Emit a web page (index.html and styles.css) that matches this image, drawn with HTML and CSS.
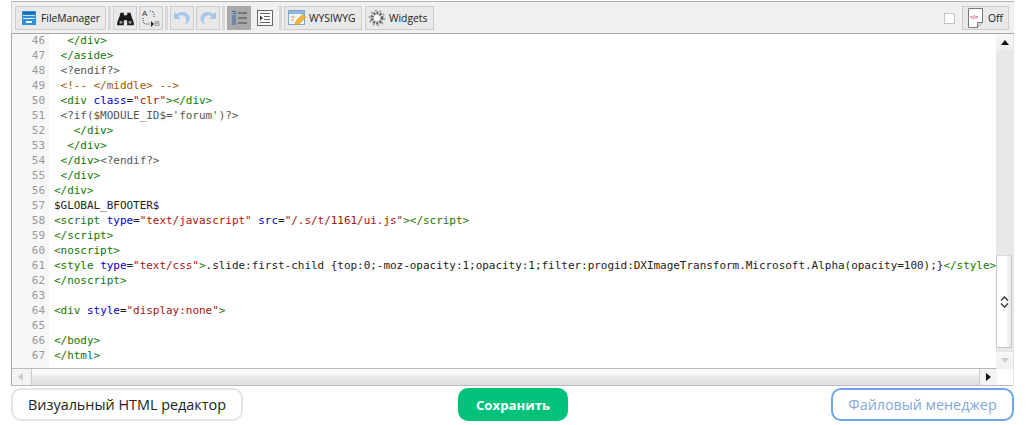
FILE: index.html
```html
<!DOCTYPE html>
<html lang="ru">
<head>
<meta charset="utf-8">
<title>Editor</title>
<link rel="stylesheet" href="styles.css">
</head>
<body>
<div class="editor">
  <div class="toolbar">
    <button class="tb tb-text tb-fm"><svg width="14" height="14" viewBox="0 0 14 14"><rect x="0" y="0" width="14" height="14" fill="#2f8fd8"/><rect x="1" y="1" width="12" height="2.500" fill="#1b6fb8"/><rect x="1" y="4" width="12" height="1" fill="#bfe3fa"/><rect x="1" y="7" width="12" height="1" fill="#dff1fc"/><rect x="4" y="10" width="6" height="2" fill="#fff"/></svg><span>FileManager</span></button>
    <i class="sep"></i>
    <button class="tb"><svg width="17" height="15" viewBox="0 0 20 18"><path d="M4 2h4v3h4V2h4l1 4 3 8v3h-8v-6H8v6H0v-3l3-8z" fill="#1c1c1c"/><circle cx="4.500" cy="13.500" r="1.800" fill="#999"/><circle cx="15.500" cy="13.500" r="1.800" fill="#999"/></svg></button>
    <button class="tb"><svg width="22" height="20" viewBox="0 0 22 20"><text x="2" y="8" class="mini">A</text><path d="M3 10v4l2 2h5M10 3h2l2 2v4" fill="none" stroke="#333" stroke-dasharray="1 1"/><path d="M11 13l3 3-3 3z" fill="#222"/><text x="14.500" y="18" class="mini mini-b">B</text></svg></button>
    <i class="sep"></i>
    <button class="tb"><svg width="18" height="16" viewBox="0 0 18 16"><path d="M1 2v7h7L5.500 6.500C8 4.500 12 5 13 9c.5 2 0 4-1.500 6 3.500-1.500 5.500-4.500 5-7.500C15.500 2.500 9 0 4 4z" fill="#a9c7e8"/></svg></button>
    <button class="tb"><svg width="18" height="16" viewBox="0 0 18 16"><path d="M17 2v7h-7l2.500-2.500C10 4.500 6 5 5 9c-.5 2 0 4 1.500 6C3 13.500 1 10.500 1.500 7.500 2.500 2.500 9 0 14 4z" fill="#a9c7e8"/></svg></button>
    <i class="sep"></i>
    <button class="tb tb-on"><svg width="16" height="16" viewBox="0 0 16 16"><path d="M7 3h9M7 8h9M7 13h9" stroke="#444"/><path d="M1 1.500h4M2 3.500h3M1 6h4M1 8h4M1 10h4M1 12h4M1 14h4" stroke="#3a62a8"/></svg></button>
    <button class="tb tb-small"><svg width="16" height="16" viewBox="0 0 16 16"><rect x=".5" y=".5" width="15" height="15" fill="#fafafa" stroke="#666"/><path d="M3 3.500h10M7 6.500h6M7 9.500h6M3 12.500h10" stroke="#666"/><path d="M3 5.500l3 2.500-3 2.500z" fill="#333"/></svg></button>
    <i class="sep"></i>
    <button class="tb tb-text tb-wys"><svg width="19" height="18" viewBox="0 0 19 18"><rect x=".5" y="1.500" width="16" height="14" fill="#eef5fb" stroke="#7fa4cc"/><rect x="1" y="2" width="15" height="3" fill="#8fb6de"/><path d="M3 8h4M3 11h3" stroke="#e39a2c"/><path d="M7 16l1-4 7-7 3 3-7 7z" fill="#f2b63c" stroke="#c58a1e" stroke-width=".5"/></svg><span>WYSIWYG</span></button>
    <button class="tb tb-text tb-wid"><svg width="18" height="18" viewBox="0 0 18 18"><circle cx="9" cy="9" r="5" fill="none" stroke="#666" stroke-width="3" stroke-dasharray="2 1.200"/><circle cx="9" cy="9" r="7.500" fill="none" stroke="#999" stroke-width="1.500" stroke-dasharray="2 2.700"/><circle cx="9" cy="9" r="2.800" fill="#fff"/></svg><span>Widgets</span></button>
    <span class="spacer"></span>
    <span class="check"></span>
    <button class="tb tb-text tb-off"><svg width="15" height="20" viewBox="0 0 15 20"><path d="M.5.5h14v14l-5 5h-9z" fill="#fff" stroke="#777"/><path d="M9.500 19.500v-5h5" fill="#ddd" stroke="#777"/><text x="2" y="11" class="micro">&lt;/&gt;</text></svg><span>Off</span></button>
  </div>
  <div class="body">
    <div class="code">
<div class="ln"><b>46</b><code>  <s>&lt;/div&gt;</s></code></div>
<div class="ln"><b>47</b><code> <s>&lt;/aside&gt;</s></code></div>
<div class="ln"><b>48</b><code> <u>&lt;?endif?&gt;</u></code></div>
<div class="ln"><b>49</b><code> <q>&lt;!-- &lt;/middle&gt; --&gt;</q></code></div>
<div class="ln"><b>50</b><code> <s>&lt;div</s> <a>class</a>=<em>"clr"</em><s>&gt;&lt;/div&gt;</s></code></div>
<div class="ln"><b>51</b><code> <u>&lt;?if($MODULE_ID$='forum')?&gt;</u></code></div>
<div class="ln"><b>52</b><code>   <s>&lt;/div&gt;</s></code></div>
<div class="ln"><b>53</b><code>  <s>&lt;/div&gt;</s></code></div>
<div class="ln"><b>54</b><code> <s>&lt;/div&gt;</s><u>&lt;?endif?&gt;</u></code></div>
<div class="ln"><b>55</b><code> <s>&lt;/div&gt;</s></code></div>
<div class="ln"><b>56</b><code><s>&lt;/div&gt;</s></code></div>
<div class="ln"><b>57</b><code>$GLOBAL_BFOOTER$</code></div>
<div class="ln"><b>58</b><code><s>&lt;script</s> <a>type</a>=<em>"text/javascript"</em> <a>src</a>=<em>"/.s/t/1161/ui.js"</em><s>&gt;&lt;/script&gt;</s></code></div>
<div class="ln"><b>59</b><code><s>&lt;/script&gt;</s></code></div>
<div class="ln"><b>60</b><code><s>&lt;noscript&gt;</s></code></div>
<div class="ln"><b>61</b><code><s>&lt;style</s> <a>type</a>=<em>"text/css"</em><s>&gt;</s>.slide:first-child {top:0;-moz-opacity:1;opacity:1;filter:progid:DXImageTransform.Microsoft.Alpha(opacity=100);}<s>&lt;/style&gt;</s></code></div>
<div class="ln"><b>62</b><code><s>&lt;/noscript&gt;</s></code></div>
<div class="ln"><b>63</b><code> </code></div>
<div class="ln"><b>64</b><code><s>&lt;div</s> <a>style</a>=<em>"display:none"</em><s>&gt;</s></code></div>
<div class="ln"><b>65</b><code> </code></div>
<div class="ln"><b>66</b><code><s>&lt;/body&gt;</s></code></div>
<div class="ln"><b>67</b><code><s>&lt;/html&gt;</s></code></div>
      <div class="fill"></div>
    </div>
    <div class="vbar">
      <div class="arrow"><i class="tri-up"></i></div>
      <div class="vtrack"><div class="vthumb"><svg width="9" height="12" viewBox="0 0 9 12"><path d="M1 4.500L4.500 1 8 4.500M1 7.500L4.500 11 8 7.500" fill="none" stroke="#444" stroke-width="1.600"/></svg></div></div>
      <div class="arrow arrow-dim"><i class="tri-down"></i></div>
    </div>
  </div>
  <div class="hbar">
    <div class="harrow"><i class="tri-left"></i></div>
    <div class="hthumb"></div>
    <div class="harrow"><i class="tri-right"></i></div>
    <div class="corner"></div>
  </div>
</div>
<div class="actions">
  <button class="btn btn-light">Визуальный HTML редактор</button>
  <button class="btn btn-save">Сохранить</button>
  <button class="btn btn-blue">Файловый менеджер</button>
</div>
</body>
</html>
```
FILE: styles.css
```css
* { box-sizing: border-box; }
html, body { margin: 0; padding: 0; }
body { width: 1030px; height: 425px; background: #fff; overflow: hidden; padding: 1px 16px 0 11px; font-family: "Liberation Sans", sans-serif; }
.editor { width: 1003px; border-left: 1px solid #aaa; border-right: 1px solid #e4e4e4; }
.toolbar { height: 33px; display: flex; align-items: center; background: #f0f0f0; border-top: 1px solid #b4b4b4; border-bottom: 1px solid #a8a8a8; border-left: 1px solid #d0d0d0; padding: 1px 5px 0 3px; margin: 0 -1px; }
.tb { height: 24px; width: 24px; padding: 0; margin: 0; background: #e9e9e9; border: 1px solid #cdcdcd; display: flex; align-items: center; justify-content: center; font: 10.3px "Open Sans", sans-serif; color: #222; }
.tb + .tb { margin-left: 2px; }
.tb-text { justify-content: flex-start; gap: 5px; }
.tb-fm { width: 91px; padding-left: 6px; }
.tb-wys { width: 78px; gap: 2px; padding-left: 3px; }
.tb-wid { width: 69px; margin-left: 3px !important; gap: 3px; padding-left: 2px; }
.tb-off { width: 47px; gap: 5px; padding-left: 5px; }
.tb-on { background: #a9a9a9; border-color: #a9a9a9; }
.tb-small { border-color: transparent; background: transparent; }
.sep { display: block; width: 3px; height: 24px; background: #d8d8d8; margin: 0 2px; }
.mini { font: 8px "Liberation Sans", sans-serif; fill: #333; }
.mini-b { fill: #777; }
.micro { font: bold 5.500px "Liberation Sans", sans-serif; fill: #d33a8c; }
.spacer { flex: 1; }
.check { width: 11px; height: 11px; background: #fff; border: 1px solid #c4c4c4; margin-right: 7px; }
.body { display: flex; height: 335px; }
.code { width: 984px; height: 335px; overflow: hidden; display: flex; flex-direction: column; border-bottom: 1px solid #bbb; }
.ln { display: flex; flex: none; height: 15px; font: 11px/13px "DejaVu Sans Mono", monospace; letter-spacing: -0.035px; }
.ln b { flex: none; width: 37px; background: #f7f7f7; color: #999; font-weight: normal; text-align: right; padding-right: 4px; }
.ln code { font: inherit; white-space: pre; padding-left: 5px; color: #222; }
.fill { flex: 1; width: 37px; background: #f7f7f7; }
s { text-decoration: none; color: #117700; }
a { color: #0000cc; }
em { font-style: normal; color: #aa1111; }
u { text-decoration: none; color: #555; }
q { quotes: none; color: #aa5500; }
.vbar { width: 17px; display: flex; flex-direction: column; background: #f4f4f4; }
.arrow { height: 16px; display: flex; align-items: center; justify-content: center; background: linear-gradient(to bottom, #f8f8f8, #efefef); }
.arrow-dim { height: 17px; }
.vtrack { flex: 1; display: flex; flex-direction: column; justify-content: flex-end; padding-bottom: 4px; background: #e8e8e8; }
.vthumb { height: 93px; display: flex; align-items: center; justify-content: center; background: linear-gradient(to right, #fff 60%, #e6e6e6); border: 1px solid #c8c8c8; border-top-color: #ddd; margin-right: 1px; }
.tri-up { border: 4px solid transparent; border-top: 0; border-bottom: 5px solid #111; }
.tri-down { border: 4px solid transparent; border-bottom: 0; border-top: 5px solid #ccc; }
.tri-left { border: 4px solid transparent; border-left: 0; border-right: 5px solid #ccc; }
.tri-right { border: 4px solid transparent; border-right: 0; border-left: 5px solid #111; }
.hbar { display: flex; height: 17px; border-bottom: 1px solid #bbb; background: #f2f2f2; }
.harrow { width: 17px; display: flex; align-items: center; justify-content: center; background: #f3f3f3; }
.hthumb { flex: 1; margin-left: 2px; background: linear-gradient(to bottom, #fbfbfb, #fbfbfb 25%, #e8e8e8 50%, #e0e0e0); border-left: 1px solid #ccc; border-right: 1px solid #ccc; }
.corner { width: 16px; background: #fff; }
.actions { display: flex; align-items: center; width: 1003px; margin-top: 2px; }
.btn { height: 33px; border-radius: 10px; background: #fff; font-family: "Open Sans", sans-serif; padding: 0; }
.btn-light { width: 232px; border: 2px solid #e4e4e4; color: #222; font-size: 14.4px; }
.btn-save { width: 110px; margin-left: 215px; border: 0; background: #00c27a; color: #fff; font-weight: bold; font-size: 13.2px; }
.btn-blue { width: 183px; margin-left: auto; border: 2px solid #6ea5e8; color: #82a8dc; font-size: 14.3px; }
```
